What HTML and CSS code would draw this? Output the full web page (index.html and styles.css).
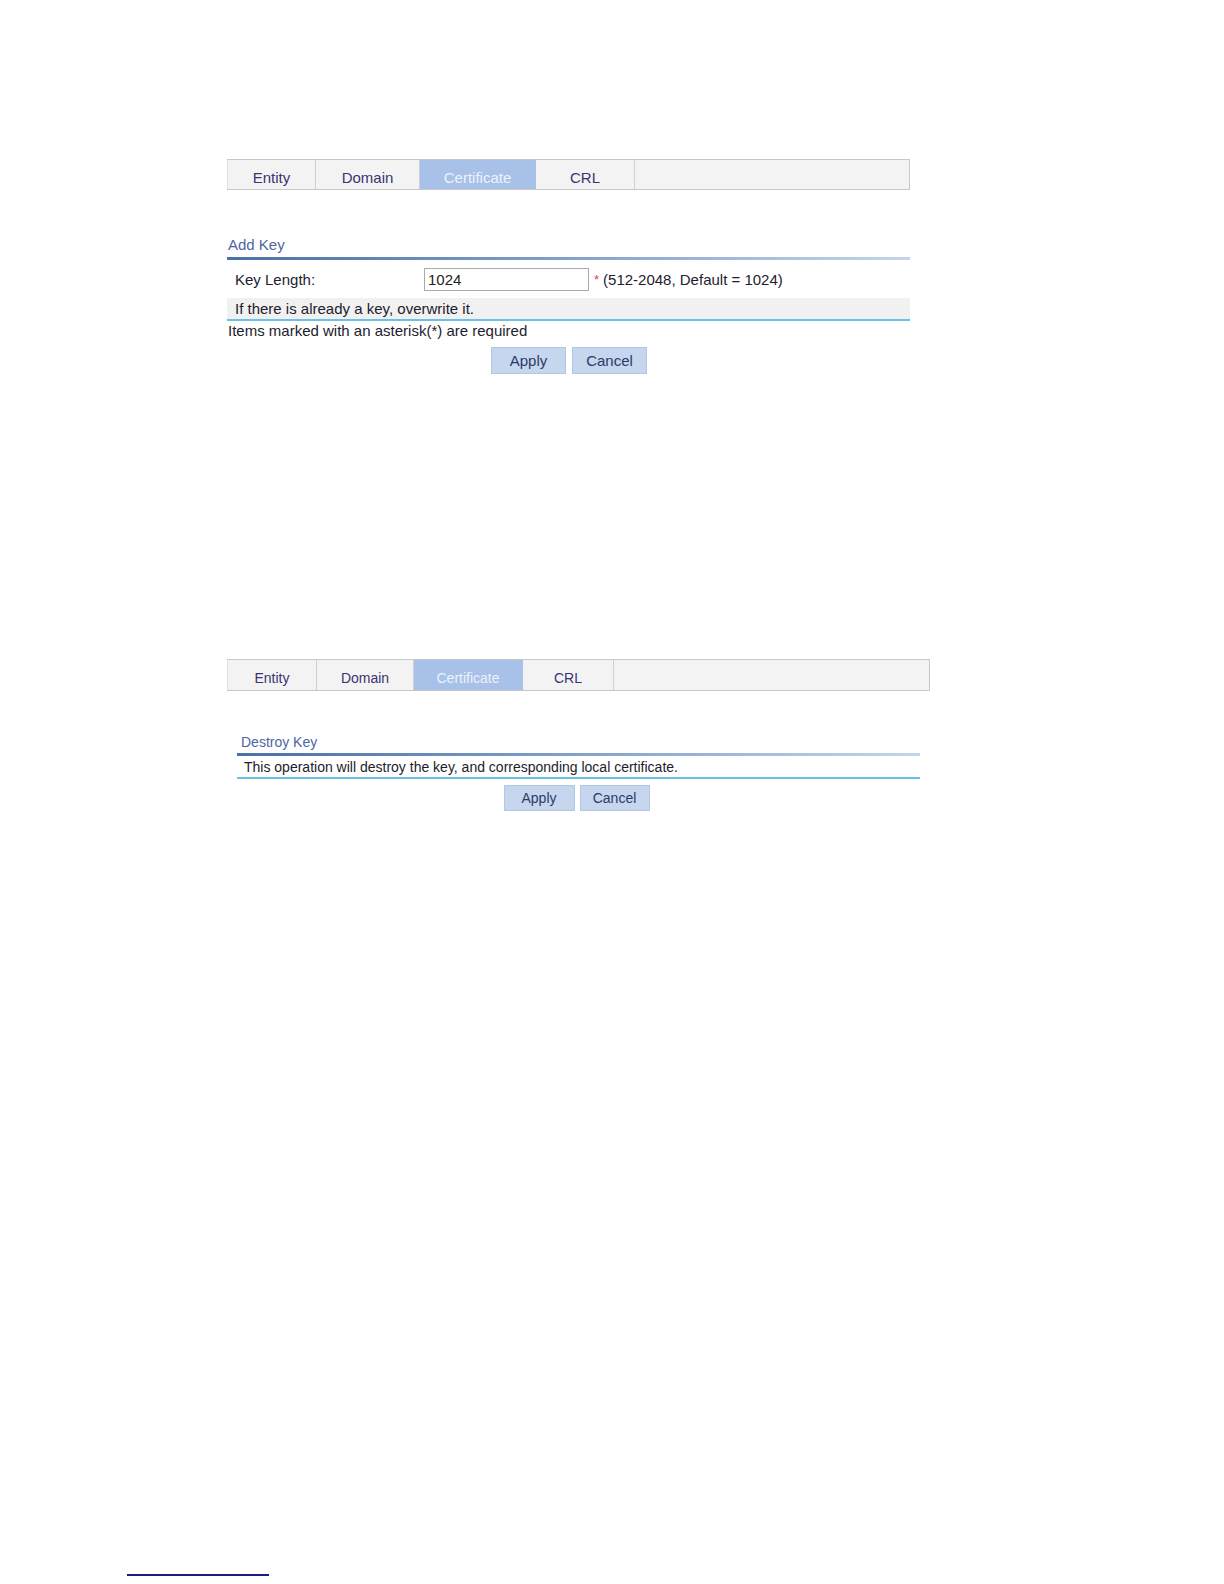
FILE: index.html
```html
<!DOCTYPE html>
<html>
<head>
<meta charset="utf-8">
<link rel="stylesheet" href="styles.css">
</head>
<body>
<div class="page">
  <section class="panel panel-add">
    <div class="tabbar">
      <div class="tab tab-entity">Entity</div>
      <div class="tab tab-domain">Domain</div>
      <div class="tab tab-cert active">Certificate</div>
      <div class="tab tab-crl">CRL</div>
      <div class="tab-rest"></div>
    </div>
    <div class="section-title">Add Key</div>
    <div class="grad-line"></div>
    <div class="form-row">
      <span class="label">Key Length:</span>
      <input class="text-input" type="text" value="1024">
      <span class="req">*</span>
      <span class="hint">(512-2048, Default = 1024)</span>
    </div>
    <div class="note-row">If there is already a key, overwrite it.</div>
    <div class="required-note">Items marked with an asterisk(*) are required</div>
    <div class="buttons">
      <button class="btn btn-apply">Apply</button>
      <button class="btn btn-cancel">Cancel</button>
    </div>
  </section>

  <section class="panel panel-destroy">
    <div class="tabbar">
      <div class="tab tab-entity">Entity</div>
      <div class="tab tab-domain">Domain</div>
      <div class="tab tab-cert active">Certificate</div>
      <div class="tab tab-crl">CRL</div>
      <div class="tab-rest"></div>
    </div>
    <div class="inner">
      <div class="section-title">Destroy Key</div>
      <div class="grad-line"></div>
      <div class="note-row">This operation will destroy the key, and corresponding local certificate.</div>
      <div class="buttons">
        <button class="btn btn-apply">Apply</button>
        <button class="btn btn-cancel">Cancel</button>
      </div>
    </div>
  </section>

  <div class="footnote-rule"></div>
</div>
</body>
</html>
```

FILE: styles.css
```css
html, body {
  margin: 0;
  padding: 0;
  background: #ffffff;
  overflow: hidden;
}

body {
  font-family: "Liberation Sans", Arial, sans-serif;
  color: #231c2c;
}

.page {
  width: 1224px;
  height: 1584px;
  padding-top: 159px;
  box-sizing: border-box;
  overflow: hidden;
  display: flow-root;
}

.panel {
  margin-left: 227px;
}

.panel-add {
  width: 683px;
  font-size: 15px;
  height: 214px;
}

.panel-destroy {
  width: 703px;
  margin-top: 286px;
  font-size: 14px;
  height: 152px;
}

/* Tabs */
.tabbar {
  display: flex;
  height: 29px;
  border-top: 1px solid #c8c8c8;
  border-bottom: 1px solid #c8c8c8;
  background: #f3f3f3;
}

.tab {
  display: flex;
  align-items: center;
  justify-content: center;
  padding-top: 5px;
  box-sizing: border-box;
  color: #3a3472;
  border-right: 1px solid #d0d0d0;
}

.tab.active {
  background: #a7c1e8;
  color: #edf2fb;
  border-right-color: #a7c1e8;
}

.tab-rest {
  flex: 1;
  border-right: 1px solid #c8c8c8;
}

.panel-add .tab-entity { width: 89px; border-left: 1px solid #e0e0e0; }
.panel-add .tab-domain { width: 104px; }
.panel-add .tab-cert { width: 116px; }
.panel-add .tab-crl { width: 99px; }

.panel-destroy .tabbar { height: 30px; }
.panel-destroy .tab { font-size: 14px; }
.panel-destroy .tab-entity { width: 90px; border-left: 1px solid #e0e0e0; }
.panel-destroy .tab-domain { width: 97px; }
.panel-destroy .tab-cert { width: 109px; }
.panel-destroy .tab-crl { width: 91px; }

/* Section title */
.section-title {
  color: #4d66a3;
  line-height: 18px;
}

.panel-add .section-title {
  margin-top: 46px;
  padding-left: 1px;
}

.grad-line {
  height: 3px;
  background: linear-gradient(to right, #4b70a6 0%, #7c9cc8 45%, #c4d5ea 100%);
}

.panel-add .grad-line {
  margin-top: 3px;
}

/* Form row */
.form-row {
  display: flex;
  align-items: center;
  height: 38px;
  padding-left: 8px;
}

.label {
  width: 189px;
}

.text-input {
  width: 165px;
  height: 23px;
  box-sizing: border-box;
  border: 1px solid #a9a9a9;
  padding: 0 3px;
  font-family: "Liberation Sans", Arial, sans-serif;
  font-size: 15px;
  color: #222;
  margin: 0;
}

.req {
  color: #d04a4a;
  margin-left: 5px;
  margin-right: 4px;
  font-size: 13px;
}

.note-row {
  background: #f1f1f1;
  border-bottom: 2px solid #6cc0e5;
}

.panel-add .note-row {
  height: 21px;
  line-height: 21px;
  padding-left: 8px;
}

.required-note {
  line-height: 18px;
  margin-top: 1px;
  padding-left: 1px;
}

/* Buttons */
.buttons {
  display: flex;
  justify-content: center;
  gap: 6px;
}

.btn {
  font-family: "Liberation Sans", Arial, sans-serif;
  background: #c6d6ef;
  border: 1px solid #b3c6e4;
  color: #2e3a66;
  padding: 0;
  margin: 0;
}

.panel-add .buttons {
  margin-top: 7px;
  padding-left: 1px;
}

.panel-add .btn {
  width: 75px;
  height: 27px;
  font-size: 15px;
}

/* Destroy panel */
.inner {
  margin: 0 10px;
}

.panel-destroy .section-title {
  margin-top: 42px;
  padding-left: 4px;
}

.panel-destroy .grad-line {
  margin-top: 2px;
}

.panel-destroy .note-row {
  background: #ffffff;
  height: 21px;
  line-height: 22px;
  padding-left: 7px;
}

.panel-destroy .buttons {
  margin-top: 6px;
  gap: 5px;
  padding-right: 4px;
}

.panel-destroy .btn {
  width: 71px;
  height: 26px;
  font-size: 14px;
}

.panel-destroy .btn-cancel {
  width: 70px;
}

/* Footnote separator */
.footnote-rule {
  width: 142px;
  height: 2px;
  background: #1b1b8c;
  margin-left: 127px;
  margin-top: 763px;
}
```
